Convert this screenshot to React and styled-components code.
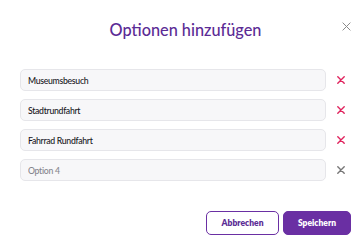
import React from "react";
import styled, { createGlobalStyle } from "styled-components";

const Global = createGlobalStyle`
  html, body { margin: 0; padding: 0; background: #fff; }
  body { font-family: Lato, "Noto Sans", sans-serif; }
`;

const Dialog = styled.div`
  width: 362px;
  height: 248px;
  box-sizing: border-box;
  padding: 20px 11px 0 20px;
  display: flex;
  flex-direction: column;
`;

const Header = styled.div`
  display: flex;
  align-items: flex-start;
  height: 22px;
`;

const Title = styled.h1`
  flex: 1;
  margin: 0;
  padding-left: 10px;
  text-align: center;
  font-size: 16.3px;
  line-height: 20px;
  font-weight: 500;
  color: #5b2b95;
`;

const CloseBtn = styled.button`
  border: 0;
  background: none;
  padding: 0;
  margin-top: 1px;
  width: 10px;
  height: 10px;
  display: flex;
  align-items: center;
  justify-content: center;
`;

const List = styled.div`
  margin-top: 27px;
  display: flex;
  flex-direction: column;
  gap: 8px;
`;

const Row = styled.div`
  display: flex;
  align-items: center;
  gap: 10px;
`;

const Field = styled.input`
  width: 306px;
  height: 22px;
  box-sizing: border-box;
  border: 1px solid #e6e6ea;
  background: #f7f7f9;
  border-radius: 5px;
  padding: 0 7px;
  font-family: Lato, "Noto Sans", sans-serif;
  font-size: 8.7px;
  letter-spacing: -0.3px;
  font-weight: 500;
  color: #18181d;
  outline: none;
  &::placeholder { color: #85858c; }
`;

const Remove = styled.button`
  border: 0;
  background: none;
  padding: 0;
  width: 10px;
  height: 10px;
  display: flex;
  align-items: center;
  justify-content: center;
`;

const Footer = styled.div`
  margin-top: 30px;
  display: flex;
  justify-content: flex-end;
  gap: 4px;
`;

const Button = styled.button`
  height: 24px;
  width: ${(p) => p.$w}px;
  box-sizing: border-box;
  border-radius: 5px;
  border: 1.5px solid #6a2fa3;
  background: ${(p) => (p.$primary ? "#6a2fa3" : "#fff")};
  color: ${(p) => (p.$primary ? "#fff" : "#5b2b95")};
  font-family: Lato, "Noto Sans", sans-serif;
  font-weight: 800;
  font-size: 8.5px;
  padding: 0;
`;

const Cross = ({ color, size = 8, w = 1.3 }) => (
  <svg width={size} height={size} viewBox="0 0 10 10">
    <path d="M1 1L9 9M9 1L1 9" stroke={color} strokeWidth={(w * 10) / size} strokeLinecap="round" />
  </svg>
);

const options = [
  { value: "Museumsbesuch" },
  { value: "Stadtrundfahrt" },
  { value: "Fahrrad Rundfahrt" },
  { value: "", placeholder: "Option 4" },
];

export default function App() {
  return (
    <>
      <Global />
      <Dialog>
        <Header>
          <Title>Optionen hinzufügen</Title>
          <CloseBtn>
            <Cross color="#8a8a8a" size={9} w={1} />
          </CloseBtn>
        </Header>
        <List>
          {options.map((o, i) => (
            <Row key={i}>
              <Field defaultValue={o.value} placeholder={o.placeholder} />
              <Remove>
                <Cross color={o.value ? "#e0245e" : "#777"} size={8} w={1.4} />
              </Remove>
            </Row>
          ))}
        </List>
        <Footer>
          <Button $w={73}>Abbrechen</Button>
          <Button $w={68} $primary>Speichern</Button>
        </Footer>
      </Dialog>
    </>
  );
}
